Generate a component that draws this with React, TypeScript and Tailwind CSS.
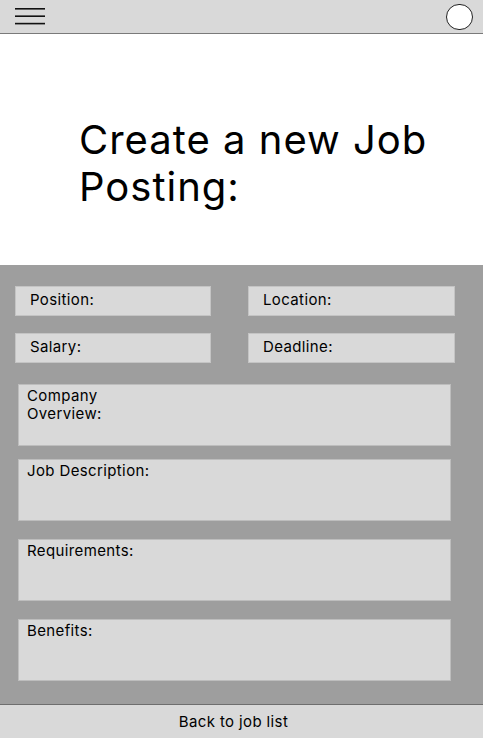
import React from "react";

const font = { fontFamily: "Inter, 'Noto Sans', sans-serif" };

function SmallField({ label, w }: { label: string; w: string }) {
  return (
    <div className={`h-[30px] ${w} bg-[#d9d9d9] border border-[#c4c4c4] pl-[14px] flex items-center pb-[2px] text-[15px] tracking-[0.025em] text-black`}>
      {label}
    </div>
  );
}

function BigField({ label }: { label: React.ReactNode }) {
  return (
    <div className="h-[62px] w-[433px] ml-[18px] bg-[#d9d9d9] border border-[#bdbdbd] pl-[8px] pt-[2px] text-[15px] leading-[18px] tracking-[0.025em] text-black">
      {label}
    </div>
  );
}

export default function App() {
  return (
    <div className="w-[483px] h-[738px] flex flex-col bg-white overflow-hidden" style={font}>
      <div className="h-[34px] bg-[#d9d9d9] border-b border-[#7a7a7a] flex items-center justify-between pl-[15px] pr-[10px]">
        <svg width="30" height="18" viewBox="0 0 30 18" className="mt-[-1px]">
          <rect x="0" y="1" width="30" height="1.6" fill="#111" />
          <rect x="0" y="8.4" width="30" height="1.6" fill="#111" />
          <rect x="0" y="15.8" width="30" height="1.6" fill="#111" />
        </svg>
        <div className="w-[27px] h-[26px] rounded-full bg-white border border-[#222]" />
      </div>
      <div className="h-[231px] bg-white pl-[79px] pt-[82px]">
        <div className="text-[40px] leading-[47px] tracking-[0.025em] text-black">Create a new Job<br />Posting:</div>
      </div>
      <div className="h-[439px] bg-[#9e9e9e] pt-[21px] flex flex-col">
        <div className="flex pl-[15px] gap-[37px]">
          <SmallField label="Position:" w="w-[196px]" />
          <SmallField label="Location:" w="w-[207px]" />
        </div>
        <div className="flex pl-[15px] gap-[37px] mt-[17px]">
          <SmallField label="Salary:" w="w-[196px]" />
          <SmallField label="Deadline:" w="w-[207px]" />
        </div>
        <div className="mt-[21px]">
          <BigField label={<>Company<br />Overview:</>} />
        </div>
        <div className="mt-[13px]">
          <BigField label="Job Description:" />
        </div>
        <div className="mt-[18px]">
          <BigField label="Requirements:" />
        </div>
        <div className="mt-[18px]">
          <BigField label="Benefits:" />
        </div>
      </div>
      <div className="flex-1 bg-[#d9d9d9] border-t border-[#6e6e6e] flex items-center justify-center pt-[2px] pr-[16px] text-[15px] tracking-[0.025em] text-black">
        Back to job list
      </div>
    </div>
  );
}
